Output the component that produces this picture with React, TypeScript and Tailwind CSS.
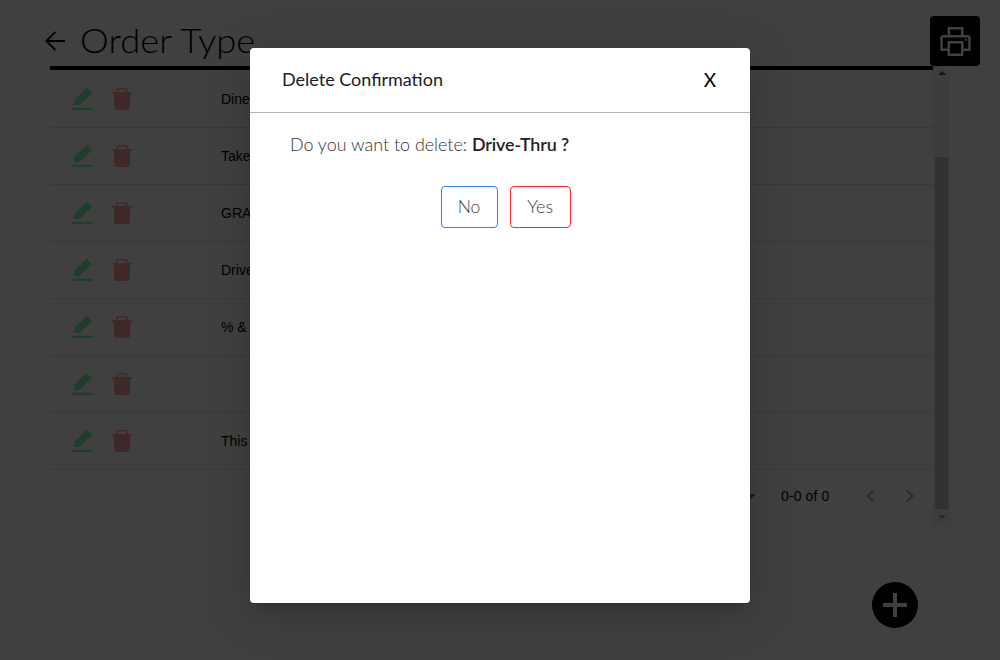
import React from "react";
import { AiOutlinePrinter } from "react-icons/ai";

const rows = ["Dine-In", "Take-Out", "GRAB", "Drive-Thru", "% & Discount", "", "This is a test"];

function EditIcon() {
  return (
    <svg width="24" height="24" viewBox="0 0 24 24" fill="#7ef2ac" className="block">
      <path d="M16.1 1.3q.6-.5 1.2 0l4.2 4.2q.5.6 0 1.2L10.3 17.3l-1 .6-4.3.2q-1 0-1-1l.3-4 .6-1z" />
      <rect x="1" y="20.7" width="22" height="2.2" rx="1" />
    </svg>
  );
}

function TrashIcon() {
  return (
    <svg width="20" height="22" viewBox="0 0 20 22" className="block">
      <path d="M5 4V1.8Q5 .8 6 .8H14Q15 .8 15 1.8V4" fill="none" stroke="#fc9e9e" strokeWidth="1.6" />
      <path d="M.7 4H19.3Q20 4 20 4.8T19.3 5.7H18.2L17.8 19.8Q17.7 22 15.6 22H4.4Q2.3 22 2.2 19.8L1.8 5.7H.7Q0 5.7 0 4.8T.7 4Z" fill="#fc9e9e" />
    </svg>
  );
}

function OrderTypePage() {
  return (
    <div className="h-full w-full bg-white text-black">
      <header className="flex h-[66px] items-start justify-between pl-[45px] pr-5 pt-4">
        <div className="flex h-[50px] items-center">
          <svg width="20" height="20" viewBox="0 0 20 20" fill="none" stroke="black" strokeWidth="1.8" className="block">
            <path d="M20 10H1.5M10.5 .8L1.3 10l9.2 9.2" />
          </svg>
          <h1 className="mb-0.5 ml-[15px] origin-left scale-x-[1.07] whitespace-nowrap font-['Lato'] text-[34px] font-light leading-[50px]">
            Order Type
          </h1>
        </div>
        <button className="flex size-[50px] items-center justify-center rounded bg-black text-white">
          <AiOutlinePrinter size={37} />
        </button>
      </header>
      <div className="ml-[50px] flex h-[460px] w-[900px]">
        <div className="w-[883px] border-t-4 border-black pt-px">
          {rows.map((name, i) => (
            <div key={i} className="flex h-[57px] items-center border-b border-[#e0e0e0] pl-5">
              <EditIcon />
              <div className="ml-[18px]"><TrashIcon /></div>
              <span className="ml-[89px] font-['Liberation_Sans'] text-sm">{name}</span>
            </div>
          ))}
          <div className="flex h-[52px] items-center justify-end pr-[19px] font-['Liberation_Sans'] text-sm">
            <svg width="10" height="5" viewBox="0 0 10 5" className="mr-[25px] block" fill="#757575">
              <path d="M0 0h10L5 5z" />
            </svg>
            <span className="w-[49px] whitespace-nowrap tracking-[.1px]">0-0 of 0</span>
            <svg width="8" height="12" viewBox="0 0 8 12" fill="none" stroke="#a6a6a6" strokeWidth="2" className="ml-9 block">
              <path d="M7 .7L1.5 6 7 11.3" />
            </svg>
            <svg width="8" height="12" viewBox="0 0 8 12" fill="none" stroke="#a6a6a6" strokeWidth="2" className="ml-8 block">
              <path d="M1 .7L6.5 6 1 11.3" />
            </svg>
          </div>
        </div>
        <div className="flex w-[17px] flex-col items-center bg-[#f1f1f1]">
          <svg width="8" height="4" viewBox="0 0 8 4" className="mt-[5px] block" fill="#505050">
            <path d="M0 4h8L4 0z" />
          </svg>
          <div className="mt-[82px] h-[352px] w-[13px] bg-[#c1c1c1]" />
          <svg width="8" height="4" viewBox="0 0 8 4" className="mt-[6px] block" fill="#a0a0a0">
            <path d="M0 0h8L4 4z" />
          </svg>
        </div>
      </div>
      <div className="flex justify-end pr-[82px] pt-14">
        <button className="flex size-[46px] items-center justify-center rounded-full bg-black">
          <svg width="24" height="24" viewBox="0 0 24 24" fill="white" className="block">
            <path d="M10 0h4v10h10v4H14v10h-4V14H0v-4h10z" />
          </svg>
        </button>
      </div>
    </div>
  );
}

function DeleteDialog() {
  return (
    <div className="h-[555px] w-[500px] rounded bg-white font-['Lato'] shadow-[0_11px_15px_-7px_rgba(0,0,0,.2),0_9px_46px_8px_rgba(0,0,0,.12)]">
      <div className="flex h-[65px] items-center justify-between border-b border-[#b5b5b5] pl-8 pr-[34px]">
        <h2 className="origin-left scale-x-[1.058] whitespace-nowrap text-[17px] text-[#202020]">Delete Confirmation</h2>
        <button className="origin-right text-[19px] leading-6 text-black">X</button>
      </div>
      <div className="flex h-[62px] items-center pl-10 pt-0.5">
        <p className="origin-left scale-x-[1.053] whitespace-nowrap text-[17px] font-light text-[#333]">
          Do you want to delete: <b className="font-semibold tracking-[-.1px] text-[#222]">Drive-Thru ?</b>
        </p>
      </div>
      <div className="flex justify-center gap-3 pl-3 pt-[11px] text-[17px] font-light text-[#444]">
        <button className="h-[42px] w-[57px] rounded border border-blue-500"><span className="inline-block scale-x-[1.03]">No</span></button>
        <button className="h-[42px] w-[61px] rounded border border-red-500"><span className="inline-block scale-x-[1.06]">Yes</span></button>
      </div>
    </div>
  );
}

export default function App() {
  return (
    <main className="relative h-[660px] w-[1000px] overflow-hidden">
      <OrderTypePage />
      <div className="absolute inset-0 flex justify-center bg-black/75 pt-12">
        <DeleteDialog />
      </div>
    </main>
  );
}
